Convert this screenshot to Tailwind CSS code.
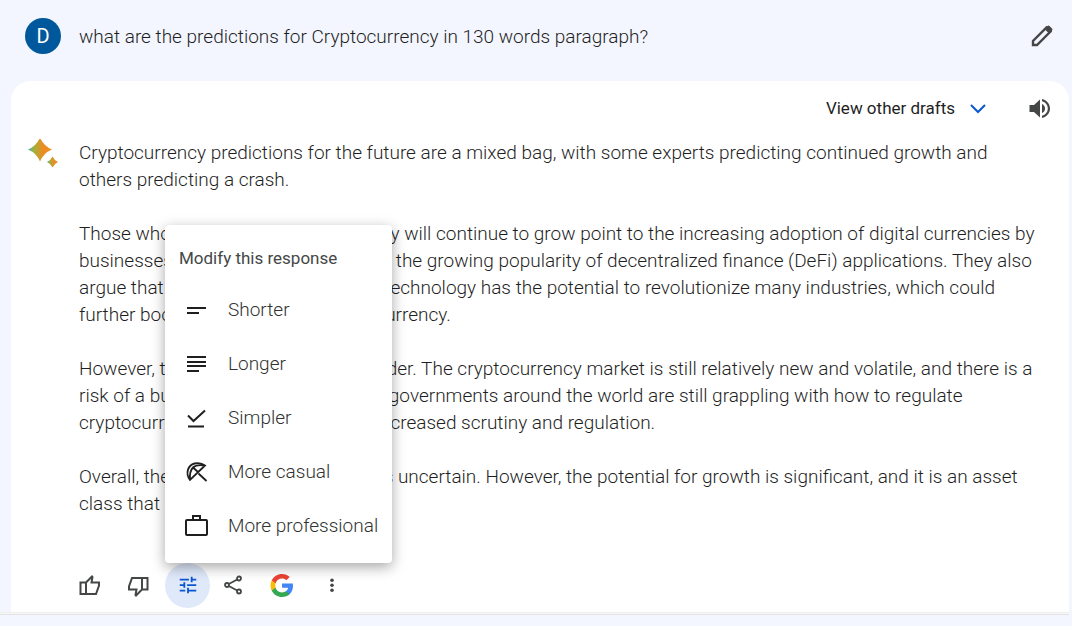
<!DOCTYPE html>
<html lang="en">
<head>
    <meta charset="UTF-8">
    <meta name="viewport" content="width=device-width, initial-scale=1.0">
    <title>Cryptocurrency predictions</title>
    <script src="https://cdn.jsdelivr.net/npm/@tailwindcss/browser@4"></script>
</head>
<body class="min-h-screen bg-[#f3f6fe] font-['Roboto',sans-serif] text-[#1f1f1f]">
    <!-- User prompt -->
    <header class="flex items-center gap-[18px] pl-[25px] pr-[18px] pt-[18px] pb-[27px]">
        <div class="flex size-9 items-center justify-center rounded-full bg-[#00589c] text-xl text-white">D</div>
        <h1 class="flex-1 text-[19px] leading-[27px] font-light">what are the predictions for Cryptocurrency in 130 words paragraph?</h1>
        <button aria-label="Edit prompt" class="text-[#444746]">
            <svg class="size-6" viewBox="0 0 24 24" fill="none" stroke="currentColor" stroke-width="2.400">
                <path d="M3 21v-4L16.500 3.500l4 4L7 21z"/>
                <path d="M14.500 5l3-3q1-1 2 0l2.500 2.500q1 1 0 2L19 9.500z" fill="currentColor" stroke="none"/>
            </svg>
        </button>
    </header>

    <!-- Response card -->
    <main class="ml-[11px] mr-[3px] rounded-t-[20px] bg-white pb-1">
        <div class="flex items-center justify-end pt-[15px] pr-[17px]">
            <button class="flex items-center gap-[11px] text-[17px] leading-6">
                View other drafts
                <svg class="size-6 text-[#0b57d0]" viewBox="0 0 24 24" fill="none" stroke="currentColor" stroke-width="2"><path d="M5 9l7 7 7-7"/></svg>
            </button>
            <button aria-label="Listen" class="ml-[38px] text-[#444746]">
                <svg class="size-6" viewBox="0 0 24 24" fill="currentColor">
                    <path d="M1.500 9v7H6l6 5.500V3.500L6 9z"/>
                    <path d="M14 8c2 1 3 2.500 3 4.500s-1 3.500-3 4.500z"/>
                    <path d="M14 3v2.200c3.500 1 5.800 3.800 5.800 7.300s-2.300 6.300-5.800 7.300v2.200c4.700-1 8-5 8-9.500s-3.300-8.500-8-9.500z"/>
                </svg>
            </button>
        </div>

        <div class="flex pt-[19px] pl-4 pr-8">
            <svg class="mr-5 size-8 shrink-0" viewBox="0 -2 32 32">
                <defs>
                    <linearGradient id="spark" x1="0" y1="0" x2="1" y2="0">
                        <stop offset="0" stop-color="#4fa8b5"/>
                        <stop offset="0.250" stop-color="#a3b13c"/>
                        <stop offset="0.650" stop-color="#f08a20"/>
                        <stop offset="1" stop-color="#e8912a"/>
                    </linearGradient>
                </defs>
                <path fill="url(#spark)" d="M13 -3.500q3.500 8.500 12 12q-8.500 3.500-12 12q-3.500-8.500-12-12q8.500-3.500 12-12z"/>
                <path fill="url(#spark)" d="M25.500 15.500q1.800 3.800 5.500 5.500q-3.800 1.800-5.500 5.500q-1.800-3.800-5.500-5.500q3.800-1.800 5.500-5.500z"/>
            </svg>
            <article class="flex-1 space-y-[27px] text-[19px] leading-[27px] font-light">
                <p>Cryptocurrency predictions for the future are a mixed bag, with some experts predicting continued growth and<br>others predicting a crash.</p>
                <p>Those who believe that cryptocurrency will continue to grow point to the increasing adoption of digital currencies by<br>businesses and individuals, as well as the growing popularity of decentralized finance (DeFi) applications. They also<br>argue that the underlying blockchain technology has the potential to revolutionize many industries, which could<br>further boost the adoption of cryptocurrency.</p>
                <p>However, there are also risks to consider. The cryptocurrency market is still relatively new and volatile, and there is a<br>risk of a bubble forming. Additionally, governments around the world are still grappling with how to regulate<br>cryptocurrency, which could lead to increased scrutiny and regulation.</p>
                <p>Overall, the future of cryptocurrency is uncertain. However, the potential for growth is significant, and it is an asset<br>class that is worth watching.</p>
            </article>
        </div>

        <!-- Action bar -->
        <div class="flex items-center pt-[46px] pl-[67px] text-[#444746]">
            <button aria-label="Good response">
                <svg class="size-6" viewBox="0 0 24 24" fill="none" stroke="currentColor" stroke-width="2">
                    <path d="M2.500 8.500H8V20H2.500zM8 8.500L14 2.500l.5.500L13.500 8.500H21v3L18 20H8"/>
                </svg>
            </button>
            <button aria-label="Bad response" class="ml-6">
                <svg class="size-6" viewBox="0 0 24 24" fill="none" stroke="currentColor" stroke-width="2">
                    <path d="M21.500 15.500H16V4h5.500zM16 15.500L10 21.500l-.5-.5L10.500 15.500H3v-3L6 4h10"/>
                </svg>
            </button>
            <div class="relative ml-[15px]">
                <button aria-label="Modify response" aria-expanded="true" class="flex size-[45px] items-center justify-center rounded-full bg-[#dfe9fa] text-[#0b57d0]">
                    <svg class="size-[22px]" viewBox="0 0 24 24" fill="currentColor"><path d="M3 16v2h6v-2H3zM3 4v2h10V4H3zm10 16v-2h8v-2h-8v-2h-2v6h2zM7 8v2H3v2h4v2h2V8H7zm14 4v-2H11v2h10zm-6-4h2V6h4V4h-4V2h-2v6z"/></svg>
                </button>

                <!-- Modify menu -->
                <div role="menu" class="absolute bottom-full left-0 w-[227px] rounded bg-white pt-5 pb-[10px] shadow-[0_4px_14px_rgba(0,0,0,0.35)]">
                    <h2 class="px-[14px] pb-[11px] text-[17px] leading-[27px] text-[#444746]">Modify this response</h2>
                    <button role="menuitem" class="flex h-[54px] w-full items-center gap-[19px] pl-5 text-left text-[19px] font-light whitespace-nowrap text-[#303331]">
                        <svg class="size-6 shrink-0 text-[#1f1f1f]" viewBox="0 0 24 24" fill="currentColor"><path d="M2 9h19v2H2zM2 14h12v2H2z"/></svg>
                        Shorter
                    </button>
                    <button role="menuitem" class="flex h-[54px] w-full items-center gap-[19px] pl-5 text-left text-[19px] font-light whitespace-nowrap text-[#303331]">
                        <svg class="size-6 shrink-0 text-[#1f1f1f]" viewBox="0 0 24 24" fill="currentColor"><path d="M2 4h19v2H2zM2 9h19v2H2zM2 13h19v2H2zM2 18h12v2H2z"/></svg>
                        Longer
                    </button>
                    <button role="menuitem" class="flex h-[54px] w-full items-center gap-[19px] pl-5 text-left text-[19px] font-light whitespace-nowrap text-[#303331]">
                        <svg class="size-6 shrink-0 text-[#1f1f1f]" viewBox="0 0 24 24" fill="none" stroke="currentColor" stroke-width="2"><path d="M3 9.500l5.500 5.500L20 4.500M3 20.500h16"/></svg>
                        Simpler
                    </button>
                    <button role="menuitem" class="flex h-[54px] w-full items-center gap-[19px] pl-5 text-left text-[19px] font-light whitespace-nowrap text-[#303331]">
                        <svg class="size-6 shrink-0 text-[#1f1f1f]" viewBox="0 0 24 24" fill="none" stroke="currentColor" stroke-width="1.800"><path d="M5 20C0 13.500 3 5 9.500 3.500Q15.500 2 20 5.500L5 20zM5 20C4.500 14 6 9.500 8 7.500s6-3 12-2M8 7.500l5 4.500M13.500 13.500l8 7.500"/></svg>
                        More casual
                    </button>
                    <button role="menuitem" class="flex h-[54px] w-full items-center gap-[19px] pl-5 text-left text-[19px] font-light whitespace-nowrap text-[#303331]">
                        <svg class="size-6 shrink-0 text-[#1f1f1f]" viewBox="0 0 24 24" fill="none" stroke="currentColor" stroke-width="2"><rect x="1" y="6" width="21" height="15" rx="1"/><path d="M8 6V2h7v4"/></svg>
                        More professional
                    </button>
                </div>
            </div>
            <button aria-label="Share" class="ml-[11px]">
                <svg class="size-6" viewBox="0 0 24 24" fill="none" stroke="currentColor" stroke-width="1.800">
                    <circle cx="6" cy="11" r="2"/><circle cx="18" cy="4.500" r="2"/><circle cx="18" cy="17.500" r="2"/>
                    <path d="M7.800 10l8.400-4.500M7.800 12l8.400 4.500"/>
                </svg>
            </button>
            <button aria-label="Google it" class="ml-[25px]">
                <svg class="size-6" viewBox="1 1 22 23">
                    <path fill="#4285f4" d="M22.560 12.250c0-.780-.070-1.530-.200-2.250H12v4.260h5.920c-.260 1.370-1.040 2.530-2.210 3.310v2.770h3.570c2.080-1.920 3.280-4.740 3.280-8.090z"/>
                    <path fill="#34a853" d="M12 23c2.970 0 5.460-.980 7.280-2.660l-3.570-2.770c-.980.660-2.230 1.060-3.710 1.060-2.860 0-5.290-1.930-6.160-4.530H2.180v2.840C3.990 20.530 7.700 23 12 23z"/>
                    <path fill="#fbbc05" d="M5.840 14.090c-.220-.660-.350-1.360-.350-2.090s.130-1.430.350-2.090V7.070H2.180C1.430 8.550 1 10.220 1 12s.430 3.450 1.180 4.930l3.660-2.840z"/>
                    <path fill="#ea4335" d="M12 5.380c1.620 0 3.060.560 4.210 1.640l3.150-3.150C17.450 2.090 14.970 1 12 1 7.700 1 3.990 3.470 2.180 7.070l3.660 2.840c.870-2.600 3.300-4.530 6.160-4.530z"/>
                </svg>
            </button>
            <button aria-label="More options" class="ml-[26px]">
                <svg class="size-6" viewBox="0 0 24 24" fill="currentColor"><circle cx="12" cy="6.200" r="1.800"/><circle cx="12" cy="11.200" r="1.800"/><circle cx="12" cy="16.200" r="1.800"/></svg>
            </button>
        </div>
    </main>
    <div class="mr-[3px] h-[3px] border-t border-b border-t-[#efefef] border-b-[#e3e3e6] bg-[#f8f8f8]"></div>
</body>
</html>
